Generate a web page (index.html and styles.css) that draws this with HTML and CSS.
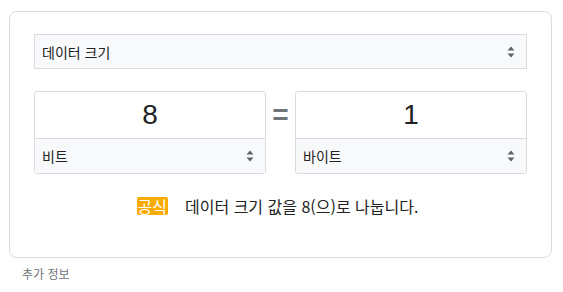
FILE: index.html
```html
<!DOCTYPE html>
<html lang="ko">
<head>
<meta charset="utf-8">
<link rel="stylesheet" href="styles.css">
</head>
<body>
<div class="page">
  <div class="card">
    <div class="select big-select">
      <span class="select-label">데이터 크기</span>
      <svg class="arrows" width="8" height="12" viewBox="0 0 8 12"><path d="M4 0.5 L7.5 4.5 H0.5 Z M4 11.5 L7.5 7.5 H0.5 Z" fill="#5f6368"/></svg>
    </div>
    <div class="convert-row">
      <div class="unit-box">
        <div class="value">8</div>
        <div class="select unit-select">
          <span class="select-label">비트</span>
          <svg class="arrows" width="8" height="12" viewBox="0 0 8 12"><path d="M4 0.5 L7.5 4.5 H0.5 Z M4 11.5 L7.5 7.5 H0.5 Z" fill="#5f6368"/></svg>
        </div>
      </div>
      <div class="equals">=</div>
      <div class="unit-box">
        <div class="value">1</div>
        <div class="select unit-select">
          <span class="select-label">바이트</span>
          <svg class="arrows" width="8" height="12" viewBox="0 0 8 12"><path d="M4 0.5 L7.5 4.5 H0.5 Z M4 11.5 L7.5 7.5 H0.5 Z" fill="#5f6368"/></svg>
        </div>
      </div>
    </div>
    <div class="formula">
      <span class="badge">공식</span>
      <span class="formula-text">데이터 크기 값을 8(으)로 나눕니다.</span>
    </div>
  </div>
  <div class="more">추가 정보</div>
</div>
</body>
</html>
```
FILE: styles.css
```css
* { box-sizing: border-box; }
html, body { margin: 0; padding: 0; background: #fff; }
body {
  font-family: "Noto Sans CJK KR", "Noto Sans", Arial, sans-serif;
  color: #222;
}
.page {
  padding: 11px 11px 0 9px;
}
.card {
  width: 543px;
  height: 247px;
  border: 1px solid #dadce0;
  border-radius: 8px;
  padding: 22px 24px 0 24px;
}
.select {
  display: flex;
  align-items: center;
  justify-content: space-between;
  background: #f8f9fa;
  font-size: 14px;
  color: #222;
}
.big-select {
  height: 35px;
  border: 1px solid #dadce0;
  padding: 0 11px 0 7px;
}
.select-label { line-height: 1; }
.arrows { display: block; }
.convert-row {
  display: flex;
  align-items: flex-start;
  margin-top: 22px;
}
.unit-box {
  width: 232px;
  height: 83px;
  border: 1px solid #dadce0;
  border-radius: 3px;
  display: flex;
  flex-direction: column;
  overflow: hidden;
}
.value {
  height: 47px;
  border-bottom: 1px solid #dadce0;
  display: flex;
  align-items: center;
  justify-content: center;
  font-family: "Liberation Sans", Arial, sans-serif;
  font-size: 28px;
  color: #202124;
}
.unit-select {
  flex: 1;
  padding: 0 11px 0 7px;
}
.equals {
  width: 29px;
  text-align: center;
  font-family: "Liberation Sans", Arial, sans-serif;
  font-size: 28px;
  font-weight: bold;
  line-height: 1;
  color: #70757a;
  padding-top: 10px;
}
.formula {
  display: flex;
  align-items: center;
  justify-content: center;
  margin-top: 20px;
  padding-right: 6px;
}
.badge {
  background: #f9ab00;
  color: #fff;
  font-size: 16px;
  line-height: 18px;
  height: 18px;
  padding: 0 1px;
  border-radius: 2px;
  margin-right: 17px;
}
.formula-text {
  font-size: 16px;
  color: #222;
}
.more {
  margin-top: 7px;
  padding-left: 13px;
  font-size: 12px;
  color: #70757a;
}
```
